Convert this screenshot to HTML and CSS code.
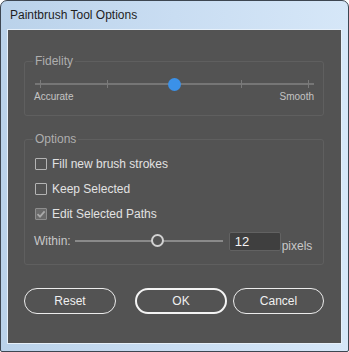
FILE: index.html
```html
<!DOCTYPE html>
<html lang="en">
<head>
    <meta charset="UTF-8">
    <title>Paintbrush Tool Options</title>
    <link rel="stylesheet" href="styles.css">
</head>
<body>
    <div class="window">
        <div class="titlebar">Paintbrush Tool Options</div>
        <div class="dialog">
            <fieldset class="group fidelity">
                <legend>Fidelity</legend>
                <div class="slider">
                    <div class="track"></div>
                    <div class="ticks">
                        <span></span><span></span><span></span><span></span><span></span>
                    </div>
                    <div class="thumb"></div>
                </div>
                <div class="slider-labels">
                    <span>Accurate</span>
                    <span>Smooth</span>
                </div>
            </fieldset>

            <fieldset class="group options">
                <legend>Options</legend>
                <label class="check-row">
                    <span class="box"></span>
                    Fill new brush strokes
                </label>
                <label class="check-row">
                    <span class="box"></span>
                    Keep Selected
                </label>
                <label class="check-row">
                    <span class="box checked">
                        <svg width="10" height="10" viewBox="0 0 10 10"><path d="M1.5 5.2 L4 7.6 L8.6 2.4" fill="none" stroke="#a9a9a9" stroke-width="1.8"/></svg>
                    </span>
                    Edit Selected Paths
                </label>
                <div class="within-row">
                    <span class="within-label">Within:</span>
                    <div class="small-slider">
                        <div class="small-thumb"></div>
                    </div>
                    <div class="number-box">12</div>
                    <span class="unit">pixels</span>
                </div>
            </fieldset>

            <div class="buttons">
                <button class="btn">Reset</button>
                <button class="btn primary">OK</button>
                <button class="btn cancel">Cancel</button>
            </div>
        </div>
    </div>
</body>
</html>
```

FILE: styles.css
```css
/* Base */
body {
    margin: 0;
    font-family: "Liberation Sans", Arial, sans-serif;
}

.window {
    width: 349px;
    height: 352px;
    box-sizing: border-box;
    border: 1px solid #3d4651;
    border-radius: 7px 7px 2px 2px;
    padding: 0 7px 7px 7px;
    background: linear-gradient(90deg, #bad2ea 0%, #c9ddf2 50%, #d6e7f8 100%);
    display: flex;
    flex-direction: column;
}

.titlebar {
    height: 29px;
    line-height: 29px;
    padding-left: 2px;
    font-size: 12px;
    color: #1e1e1e;
}

.dialog {
    height: 313px;
    box-sizing: border-box;
    background: #535353;
    box-shadow: 0 0 0 1px #e6f0fa;
    padding: 0 17px 0 16px;
    display: flex;
    flex-direction: column;
}

/* Groups */
.group {
    margin: 0;
    padding: 0 9px 0 10px;
    min-width: 0;
    border: 1px solid #5f5f5f;
    border-radius: 3px;
}

.group legend {
    padding: 0 2px;
    margin-left: -2px;
    font-size: 12px;
    line-height: 12px;
    color: #aeaeae;
}

.fidelity {
    margin-top: 25px;
    padding-bottom: 12px;
}

.slider {
    position: relative;
    height: 13px;
    box-sizing: border-box;
    padding-top: 5px;
    margin-top: 11px;
}

.track {
    height: 2px;
    background: #767676;
}

.ticks {
    position: absolute;
    left: 0;
    right: 0;
    top: 2px;
    padding: 0 5px;
    display: flex;
    justify-content: space-between;
}

.ticks span {
    width: 1px;
    height: 8px;
    background: #7a7a7a;
}

.thumb {
    position: absolute;
    left: 133px;
    top: 0;
    width: 13px;
    height: 13px;
    border-radius: 50%;
    background: #3b91e8;
}

.slider-labels {
    display: flex;
    justify-content: space-between;
    margin-left: -1px;
    font-size: 10px;
    line-height: 12px;
    color: #c4c4c4;
}

.options {
    margin-top: 17px;
    padding-top: 6px;
    padding-bottom: 8px;
}

.check-row {
    height: 25px;
    display: flex;
    align-items: center;
    gap: 5px;
    font-size: 12px;
    color: #e2e2e2;
}

.box {
    width: 10px;
    height: 10px;
    border: 1px solid #b4b4b4;
    border-radius: 1px;
    display: flex;
    align-items: center;
    justify-content: center;
}

.box.checked {
    border-color: #8e8e8e;
    background: #6a6a6a;
}

.within-row {
    height: 30px;
    display: flex;
    align-items: center;
    margin-left: -1px;
    font-size: 12px;
    color: #c8c8c8;
}

.small-slider {
    position: relative;
    width: 148px;
    height: 2px;
    margin: 0 6px 0 4px;
    background: #8a8a8a;
}

.small-thumb {
    position: absolute;
    left: 76px;
    top: -6px;
    width: 9px;
    height: 9px;
    border: 2px solid #d2d2d2;
    border-radius: 50%;
    background: #535353;
}

.number-box {
    width: 45px;
    height: 17px;
    padding-left: 5px;
    border: 1px solid #626262;
    border-radius: 2px;
    background: #3f3f3f;
    color: #f4f4f4;
    font-size: 13px;
    line-height: 17px;
}

.unit {
    margin-left: 1px;
    padding-top: 9px;
    font-size: 12px;
}

/* Buttons */
.buttons {
    display: flex;
    margin-top: 23px;
}

.btn {
    width: 92px;
    height: 26px;
    border: 1px solid #ececec;
    border-radius: 13px;
    background: transparent;
    color: #f0f0f0;
    font-family: "Liberation Sans", Arial, sans-serif;
    font-size: 12px;
    padding: 0;
}

.btn.primary {
    border: 2px solid #f4f4f4;
    margin-left: 19px;
}

.btn.cancel {
    width: 91px;
    margin-left: 6px;
}
```
